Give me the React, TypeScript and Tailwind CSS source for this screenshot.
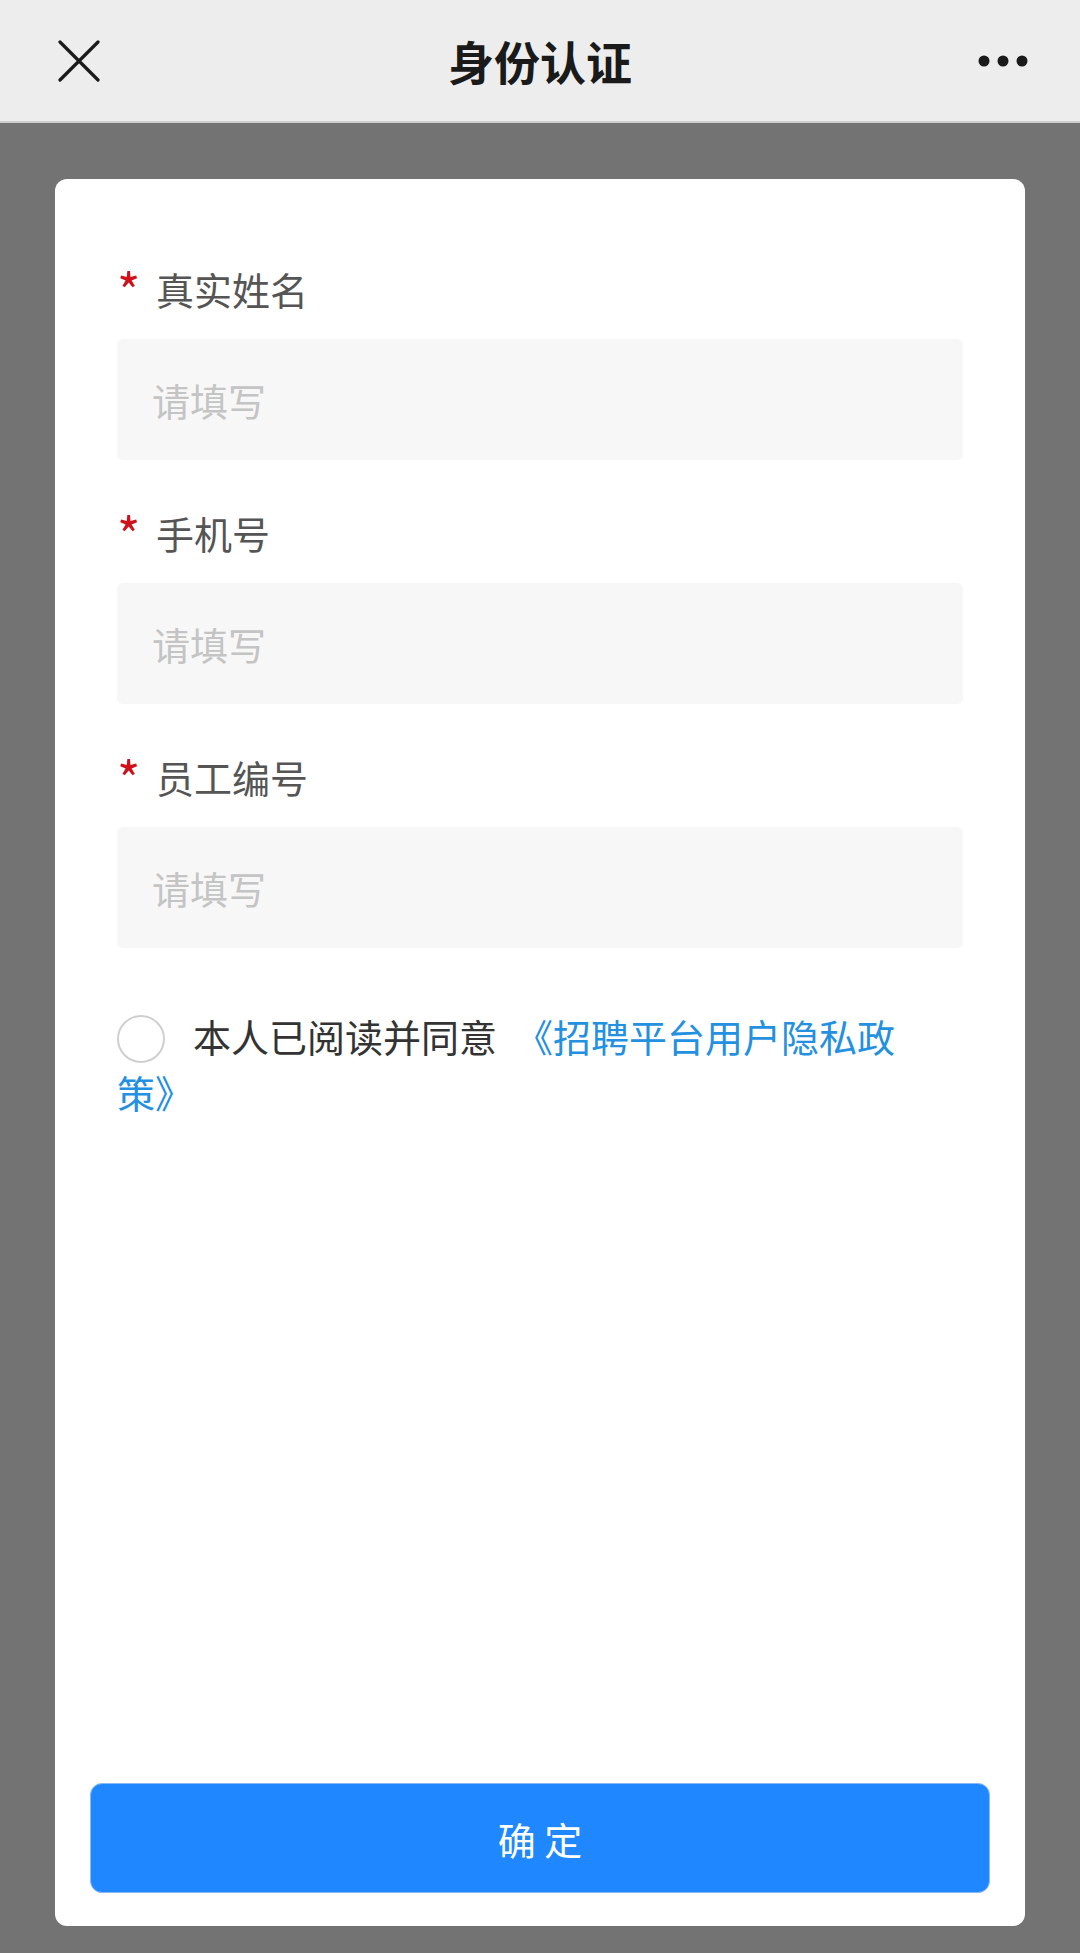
import { useState } from 'react';

const fields = ['真实姓名', '手机号', '员工编号'];

function CloseIcon() {
  return (
    <svg width="42" height="42" viewBox="0 0 42 42" fill="none">
      <path d="M2 2 L40 40 M40 2 L2 40" stroke="#1a1a1a" strokeWidth="3.2" strokeLinecap="round" />
    </svg>
  );
}

function MoreIcon() {
  return (
    <svg width="50" height="12" viewBox="0 0 50 12" fill="#1a1a1a">
      <circle cx="6" cy="6" r="5.5" />
      <circle cx="25" cy="6" r="5.5" />
      <circle cx="44" cy="6" r="5.5" />
    </svg>
  );
}

function Field({ label }: { label: string }) {
  return (
    <div className="mb-[49px]">
      <div className="flex items-center h-[48px] mb-[26px] text-[38px] leading-[48px] text-[#555555]">
        <span className="w-[39px] text-[50px] leading-[48px] text-[#d0101b]">*</span>
        <span>{label}</span>
      </div>
      <input
        className="block w-full h-[121px] px-[35px] rounded-[6px] bg-[#f7f7f7] text-[38px] text-[#333333] outline-none placeholder:text-[#c4c4c4]"
        placeholder="请填写"
      />
    </div>
  );
}

export default function App() {
  const [agreed, setAgreed] = useState(false);

  return (
    <div
      className="min-h-screen flex flex-col bg-[#737373]"
      style={{ fontFamily: '"Noto Sans CJK SC", "Noto Sans", sans-serif' }}
    >
      <header className="relative flex items-center justify-between h-[123px] pl-[58px] pr-[52px] bg-[#ededed] border-b-2 border-[#cdcdcd]">
        <CloseIcon />
        <h1 className="absolute left-1/2 -translate-x-1/2 text-[46px] font-bold text-[#1a1a1a]">身份认证</h1>
        <MoreIcon />
      </header>

      <main className="flex-1 flex flex-col px-[55px] pt-[56px] pb-[27px]">
        <div className="flex-1 flex flex-col bg-white rounded-[12px] px-[35px] pt-[86px] pb-[33px]">
          <div className="flex flex-col px-[27px]">
            {fields.map((f) => (
              <Field key={f} label={f} />
            ))}

            <p className="w-[830px] mt-[11px] text-[38px] leading-[56px] text-[#333333]">
              <button
                onClick={() => setAgreed(!agreed)}
                className={`inline-block align-middle -mt-[6px] w-[48px] h-[48px] mr-[28px] rounded-full border-2 ${
                  agreed ? 'border-[#1f87ff] bg-[#1f87ff]' : 'border-[#cfcfcf] bg-white'
                }`}
              />
              本人已阅读并同意
              <span className="ml-[18px] text-[#2490e0]">《招聘平台用户隐私政策》</span>
            </p>
          </div>

          <button className="mt-auto h-[110px] rounded-[12px] border border-[#8ab8f5] bg-[#1f87ff] text-[38px] text-white">
            确 定
          </button>
        </div>
      </main>
    </div>
  );
}
